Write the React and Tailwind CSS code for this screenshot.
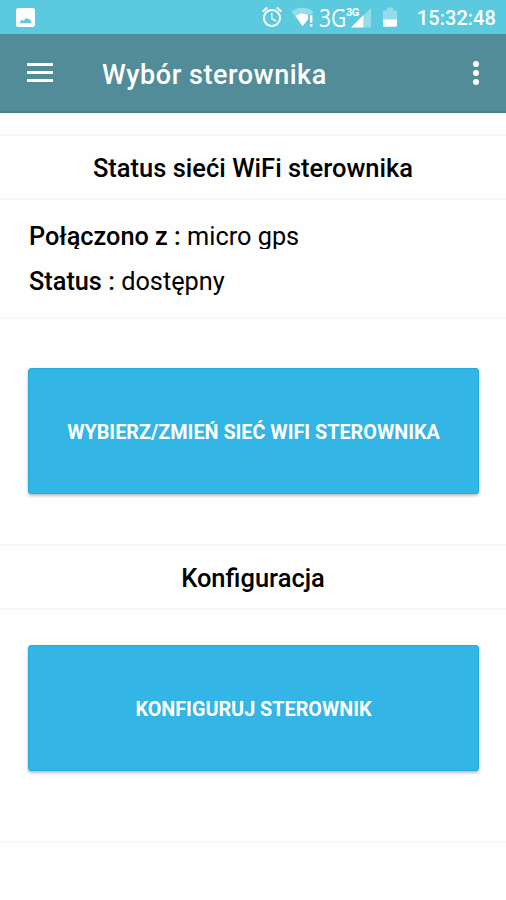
import { MdAlarm } from 'react-icons/md';

function PictureIcon() {
    return (
        <svg className="h-[19px] w-[19px]" viewBox="0 0 19 19" fill="none">
            <rect width="19" height="19" rx="2.5" fill="#fff" />
            <path d="M3.2 15.3 6 11.600l1.600 1.400 2.800-3.600 1.600 2.300 1.300-1.100 2.600 4.700z" fill="#5bcadf" />
        </svg>
    );
}

function WifiIcon() {
    return (
        <svg className="h-5 w-6" viewBox="0 0 24 20" fill="#fff">
            <path d="M.5 4.800C3.500 2 7.300.8 11.500.8s8 1.200 11 4L20.500 7.500h-3.500l-5.500 11.500z" opacity=".35" />
            <path d="M4.800 9.200C6.500 7.500 8.700 6.500 11.500 6.500c2.300 0 4.200.7 5.600 2v3.800L11.500 19.300z" />
            <path d="M19 8h2.400v7.500H19zM19 17h2.400v2.400H19z" />
        </svg>
    );
}

function SignalIcon() {
    return (
        <svg className="h-5 w-5" viewBox="0 0 20 20" fill="#fff">
            <path d="M12.500 7.500 20 0v19.500h-7.500z" opacity=".35" />
            <path d="M0 19.500 12.500 7v12.500z" />
        </svg>
    );
}

function BatteryIcon() {
    return (
        <svg className="h-5 w-3.5" viewBox="0 0 14 20" fill="#fff">
            <path d="M0 4.500a1 1 0 0 1 1-1h3V.5h6v3h3a1 1 0 0 1 1 1V13H0z" opacity=".35" />
            <path d="M0 12.500h14v6.300a1 1 0 0 1-1 1H1a1 1 0 0 1-1-1z" />
        </svg>
    );
}

function StatusBar() {
    return (
        <div className="flex h-[34px] items-center bg-[#5bcadf] pr-3 pl-4 text-white">
            <PictureIcon />
            <MdAlarm className="ml-auto h-6 w-6" />
            <div className="ml-[7px]">
                <WifiIcon />
            </div>
            <div className="ml-1 w-[27px]">
                <span className="inline-block origin-left scale-x-[0.84] align-middle font-['Open_Sans',sans-serif] text-[25px] leading-none">3G</span>
            </div>
            <div className="relative ml-[5px] pt-0.5">
                <span className="absolute top-px -left-[5px] text-[11px] leading-none font-bold tracking-[-0.5px]">3G</span>
                <SignalIcon />
            </div>
            <div className="ml-3">
                <BatteryIcon />
            </div>
            <span className="ml-5 w-[77px] pt-0.5 text-right text-[20px] leading-none font-medium whitespace-nowrap">15:32:48</span>
        </div>
    );
}

function Toolbar() {
    return (
        <header className="flex h-[79px] items-center border-b-2 border-[#43828d] bg-[#528c98] text-white">
            <button type="button" aria-label="Menu" className="ml-[27px] flex w-[26px] flex-col gap-[5px]">
                <span className="h-[3px] bg-white" />
                <span className="h-[3px] bg-white" />
                <span className="h-[3px] bg-white" />
            </button>
            <h1 className="ml-[49px] pt-1.5 text-[27px] font-medium tracking-[0.02em]">Wybór sterownika</h1>
            <button type="button" aria-label="Więcej" className="mt-px mr-[27px] ml-auto flex flex-col gap-[3px]">
                <span className="h-1.5 w-1.5 rounded-full bg-white" />
                <span className="h-1.5 w-1.5 rounded-full bg-white" />
                <span className="h-1.5 w-1.5 rounded-full bg-white" />
            </button>
        </header>
    );
}

function SectionTitle({ children }) {
    return (
        <h2 className="flex h-16 items-center justify-center border-b-2 border-[#f7f7f7] pt-0.5 text-[25.5px] font-medium">
            {children}
        </h2>
    );
}

function ActionButton({ children }) {
    return (
        <button
            type="button"
            className="h-[126px] w-full rounded-[3px] border border-[#20addd] bg-[#33b5e5] pt-1 text-[19.8px] font-bold text-white shadow-[0_2px_3px_rgba(0,0,0,0.25)]"
        >
            {children}
        </button>
    );
}

export default function App() {
    return (
        <div className="min-h-[900px] bg-[#fefefe] font-['Roboto',sans-serif] text-black">
            <StatusBar />
            <Toolbar />

            <main>
                <section className="mt-[21px] border-t-2 border-[#f7f7f7]">
                    <SectionTitle>Status sieći WiFi sterownika</SectionTitle>
                    <div className="flex h-[119px] flex-col gap-[15px] border-b-2 border-[#f7f7f7] px-[29px] pt-[19px] text-[25.3px]">
                        <p className="h-[30px] overflow-hidden leading-[35px]">
                            <span className="font-medium">Połączono z :</span> micro gps
                        </p>
                        <p className="h-[34px] leading-[35px]">
                            <span className="font-medium">Status :</span> dostępny
                        </p>
                    </div>
                    <div className="pt-[49px] pr-[27px] pb-[50px] pl-[28px]">
                        <ActionButton>WYBIERZ/ZMIEŃ SIEĆ WIFI STEROWNIKA</ActionButton>
                    </div>
                </section>

                <section className="border-y-2 border-[#f7f7f7]">
                    <SectionTitle>Konfiguracja</SectionTitle>
                    <div className="pt-[35px] pr-[27px] pb-[70px] pl-[28px]">
                        <ActionButton>KONFIGURUJ STEROWNIK</ActionButton>
                    </div>
                </section>
            </main>
        </div>
    );
}
